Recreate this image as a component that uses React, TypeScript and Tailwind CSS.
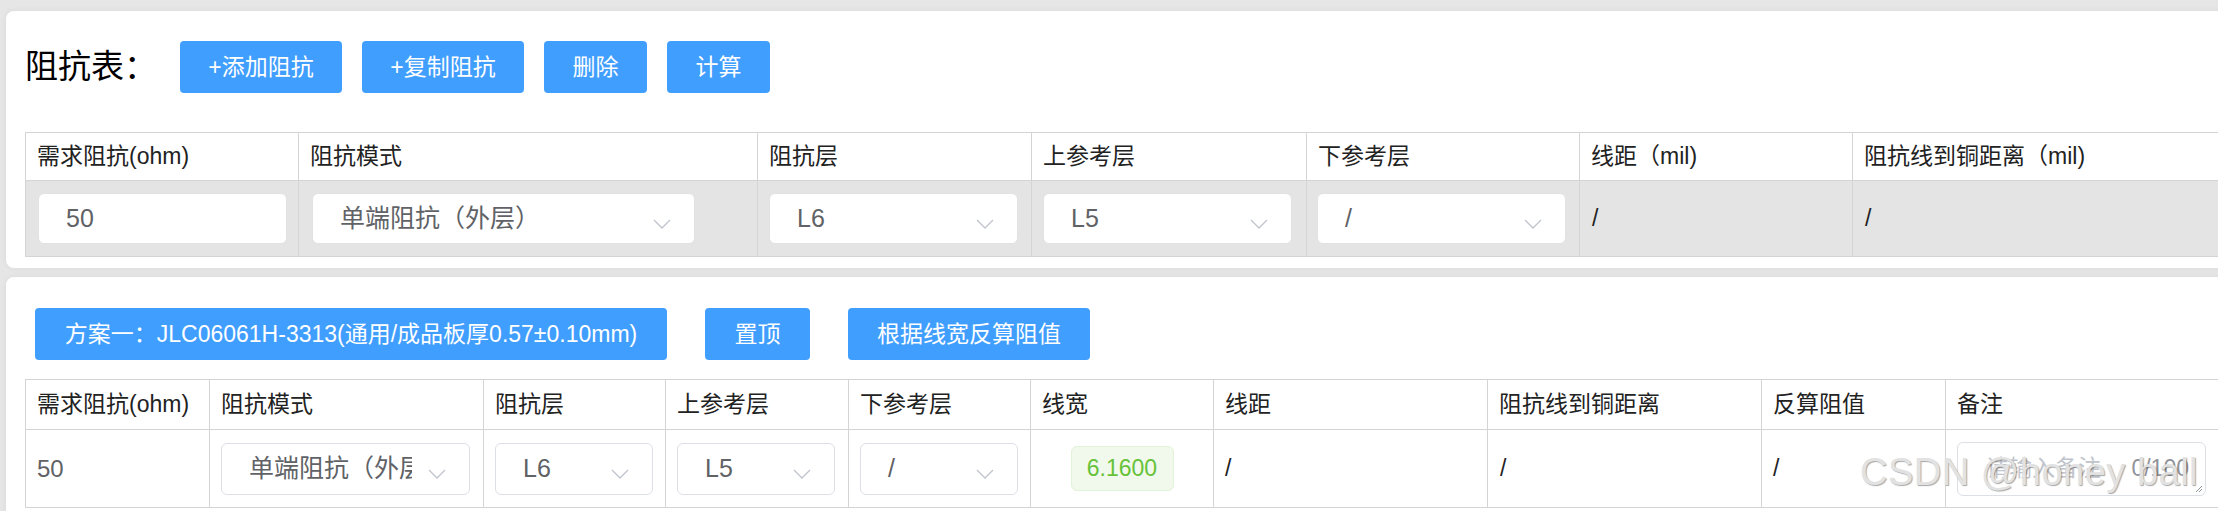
import React from 'react';
import clsx from 'clsx';

const FONT = "font-['Liberation_Sans','Noto_Sans_CJK_SC',sans-serif]";
const LINE = 'border-[#d4d4d4]';

function Chevron() {
  return (
    <svg width="18" height="10" viewBox="0 0 18 10" fill="none">
      <path d="M1 1l8 8 8-8" stroke="#c0c4cc" strokeWidth="1.3" />
    </svg>
  );
}

function Btn({ label, w }: { label: string; w: string }) {
  return (
    <button className={clsx('flex h-[52px] shrink-0 items-center justify-center whitespace-nowrap rounded-[4px] bg-[#409eff] text-[23px] text-white', w)}>
      {label}
    </button>
  );
}

function Select({ value, w, h, soft = false }: { value: string; w: string; h: string; soft?: boolean }) {
  return (
    <div
      className={clsx(
        'flex items-center rounded-[6px] border bg-white',
        w,
        h,
        soft ? 'border-[#e2e2e2]' : 'border-[#dcdfe6]'
      )}
    >
      <span className="min-w-0 flex-1 overflow-hidden whitespace-nowrap pl-[27px] text-[25px] text-[#606266]">{value}</span>
      <span className="flex w-[57px] shrink-0 justify-end pr-[23px] pt-[10px]">
        <Chevron />
      </span>
    </div>
  );
}

function HeadCell({ label, w, h }: { label: string; w: string; h: string }) {
  return (
    <div className={clsx('flex shrink-0 items-center whitespace-nowrap border-r border-b pl-[11px] text-[23px] text-[#222]', LINE, w, h)}>
      {label}
    </div>
  );
}

function Cell({ children, w, h, className }: { children?: React.ReactNode; w: string; h: string; className?: string }) {
  return (
    <div className={clsx('flex shrink-0 items-center border-r border-b', LINE, w, h, className)}>
      {children}
    </div>
  );
}

const t1Cols = ['w-[273px]', 'w-[459px]', 'w-[274px]', 'w-[275px]', 'w-[273px]', 'w-[273px]', 'w-[420px]'];
const t1Heads = ['需求阻抗(ohm)', '阻抗模式', '阻抗层', '上参考层', '下参考层', '线距（mil)', '阻抗线到铜距离（mil)'];

const t2Cols = [
  'w-[184px]',
  'w-[274px]',
  'w-[182px]',
  'w-[183px]',
  'w-[182px]',
  'w-[183px]',
  'w-[274px]',
  'w-[274px]',
  'w-[184px]',
  'w-[300px]',
];
const t2Heads = ['需求阻抗(ohm)', '阻抗模式', '阻抗层', '上参考层', '下参考层', '线宽', '线距', '阻抗线到铜距离', '反算阻值', '备注'];

export default function App() {
  return (
    <div className={clsx('relative h-[511px] w-[2218px] overflow-hidden bg-[#e6e6e6] pl-[6px] pt-[11px]', FONT)}>
      {/* Impedance table card */}
      <div className="w-[2300px] rounded-[8px] bg-white pb-[11px] pl-[19px] pt-[30px] shadow-[0_0_6px_rgba(0,0,0,0.06)]">
        <div className="flex h-[52px] items-center">
          <span className="w-[155px] shrink-0 text-[33px] text-black">阻抗表：</span>
          <div className="flex gap-[20px]">
            <Btn label="+添加阻抗" w="w-[162px]" />
            <Btn label="+复制阻抗" w="w-[162px]" />
            <Btn label="删除" w="w-[103px]" />
            <Btn label="计算" w="w-[103px]" />
          </div>
        </div>

        <div className={clsx('mt-[39px] inline-flex flex-col border-l border-t', LINE)}>
          <div className="flex">
            {t1Heads.map((h, i) => (
              <HeadCell key={h} label={h} w={t1Cols[i]} h="h-[48px]" />
            ))}
          </div>
          <div className="flex bg-[#e4e4e4]">
            <Cell w={t1Cols[0]} h="h-[76px]" className="pl-[12px]">
              <div className="flex h-[51px] w-[249px] items-center rounded-[6px] border border-[#e2e2e2] bg-white pl-[27px] text-[25px] text-[#606266]">
                50
              </div>
            </Cell>
            <Cell w={t1Cols[1]} h="h-[76px]" className="pl-[13px]">
              <Select value="单端阻抗（外层）" w="w-[383px]" h="h-[51px]" soft />
            </Cell>
            <Cell w={t1Cols[2]} h="h-[76px]" className="pl-[11px]">
              <Select value="L6" w="w-[249px]" h="h-[51px]" soft />
            </Cell>
            <Cell w={t1Cols[3]} h="h-[76px]" className="pl-[11px]">
              <Select value="L5" w="w-[249px]" h="h-[51px]" soft />
            </Cell>
            <Cell w={t1Cols[4]} h="h-[76px]" className="pl-[10px]">
              <Select value="/" w="w-[249px]" h="h-[51px]" soft />
            </Cell>
            <Cell w={t1Cols[5]} h="h-[76px]" className="pl-[12px] text-[23px] text-[#222]">
              /
            </Cell>
            <Cell w={t1Cols[6]} h="h-[76px]" className="pl-[12px] text-[23px] text-[#222]">
              /
            </Cell>
          </div>
        </div>
      </div>

      {/* Scheme card */}
      <div className="mt-[9px] w-[2300px] rounded-[8px] bg-white pb-[20px] pl-[19px] pt-[31px] shadow-[0_0_6px_rgba(0,0,0,0.06)]">
        <div className="flex gap-[38px] pl-[10px]">
          <Btn label="方案一：JLC06061H-3313(通用/成品板厚0.57±0.10mm)" w="w-[632px]" />
          <Btn label="置顶" w="w-[105px]" />
          <Btn label="根据线宽反算阻值" w="w-[242px]" />
        </div>

        <div className={clsx('mt-[19px] inline-flex flex-col border-l border-t', LINE)}>
          <div className="flex">
            {t2Heads.map((h, i) => (
              <HeadCell key={h} label={h} w={t2Cols[i]} h="h-[50px]" />
            ))}
          </div>
          <div className="flex bg-white">
            <Cell w={t2Cols[0]} h="h-[78px]" className="pl-[11px] text-[24px] text-[#606266]">
              50
            </Cell>
            <Cell w={t2Cols[1]} h="h-[78px]" className="pl-[11px]">
              <Select value="单端阻抗（外层）" w="w-[249px]" h="h-[52px]" />
            </Cell>
            <Cell w={t2Cols[2]} h="h-[78px]" className="pl-[11px]">
              <Select value="L6" w="w-[158px]" h="h-[52px]" />
            </Cell>
            <Cell w={t2Cols[3]} h="h-[78px]" className="pl-[11px]">
              <Select value="L5" w="w-[158px]" h="h-[52px]" />
            </Cell>
            <Cell w={t2Cols[4]} h="h-[78px]" className="pl-[11px]">
              <Select value="/" w="w-[158px]" h="h-[52px]" />
            </Cell>
            <Cell w={t2Cols[5]} h="h-[78px]" className="justify-center">
              <span className="flex h-[45px] w-[103px] items-center justify-center rounded-[6px] border border-[#e1f3d8] bg-[#f0f9eb] text-[23px] text-[#67c23a]">
                6.1600
              </span>
            </Cell>
            <Cell w={t2Cols[6]} h="h-[78px]" className="pl-[11px] text-[23px] text-[#222]">
              /
            </Cell>
            <Cell w={t2Cols[7]} h="h-[78px]" className="pl-[12px] text-[23px] text-[#222]">
              /
            </Cell>
            <Cell w={t2Cols[8]} h="h-[78px]" className="pl-[11px] text-[23px] text-[#222]">
              /
            </Cell>
            <Cell w={t2Cols[9]} h="h-[78px]" className="pl-[11px]">
              <div className="relative flex h-[54px] w-[249px] items-center justify-between rounded-[6px] border border-[#dcdfe6] bg-white pl-[28px] pr-[16px] text-[23px]">
                <span className="text-[#c0c4cc]">请输入备注</span>
                <span className="text-[#909399]">0/100</span>
                <svg className="absolute bottom-[2px] right-[2px]" width="10" height="8" viewBox="0 0 10 8" fill="none">
                  <path d="M9 1L3 7M9 4L6 7" stroke="#909399" strokeWidth="1" />
                </svg>
              </div>
            </Cell>
          </div>
        </div>
      </div>

      {/* watermark */}
      <span className="pointer-events-none absolute left-[1860px] top-[453px] text-[38px] leading-none tracking-[0.5px] text-[#e2e2e2] [text-shadow:1px_1px_1px_rgba(0,0,0,0.35)]">
        CSDN @honey ball
      </span>
    </div>
  );
}
